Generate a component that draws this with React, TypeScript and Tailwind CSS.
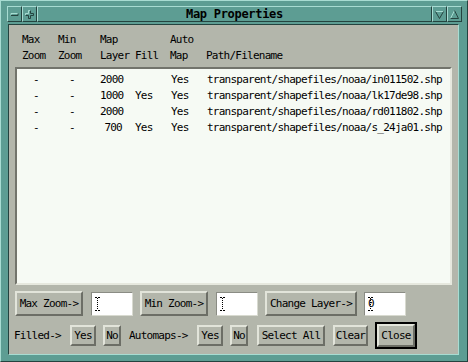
import React from "react";

const rows = [
  { layer: "2000", fill: "", auto: "Yes", path: "transparent/shapefiles/noaa/in011502.shp" },
  { layer: "1000", fill: "Yes", auto: "Yes", path: "transparent/shapefiles/noaa/lk17de98.shp" },
  { layer: "2000", fill: "", auto: "Yes", path: "transparent/shapefiles/noaa/rd011802.shp" },
  { layer: "700", fill: "Yes", auto: "Yes", path: "transparent/shapefiles/noaa/s_24ja01.shp" },
];

const raised =
  "border-2 border-t-[#e2e4da] border-l-[#e2e4da] border-b-[#6c6e66] border-r-[#6c6e66] bg-[#b3b6ab]";
const tealRaised =
  "border border-t-[#a8dcd2] border-l-[#a8dcd2] border-b-[#24433f] border-r-[#24433f] bg-[#5d9d93]";

function Btn({ w, h = "h-[21px]", children }: { w: string; h?: string; children: React.ReactNode }) {
  return (
    <div className={`flex shrink-0 items-center justify-center ${w} ${h} ${raised}`}>
      <span>{children}</span>
    </div>
  );
}

function IBeam() {
  return (
    <svg width="5" height="14" viewBox="0 0 5 14" className="absolute left-[3px] top-[4px]">
      <path d="M0 0.5h2M3 0.5h2M0 13.5h2M3 13.5h2" stroke="#000" strokeWidth="1" />
      <path d="M2.5 1v12" stroke="#000" strokeWidth="1" strokeDasharray="1 1" />
    </svg>
  );
}

function Field({ value }: { value?: string }) {
  return (
    <div className="relative h-[24px] w-[42px] shrink-0 border border-t-[#8a8c84] border-l-[#8a8c84] border-b-[#d8dad0] border-r-[#d8dad0] bg-white">
      {value && <span className="absolute left-[3px] top-[3px] leading-[16px]">{value}</span>}
      <IBeam />
    </div>
  );
}

function TitleBtn({ kind }: { kind: "min" | "plus" | "down" | "up" }) {
  return (
    <div className={`flex h-full w-[15px] shrink-0 items-center justify-center ${tealRaised}`}>
      <svg width="11" height="11" viewBox="0 0 11 11">
        {kind === "min" && (
          <>
            <path d="M2 6.5V4.5H9" stroke="#a8dcd2" fill="none" />
            <path d="M2 6.5H9V4.5" stroke="#24433f" fill="none" />
          </>
        )}
        {kind === "plus" && (
          <>
            <path d="M1.5 6.5V4.5H4.5V1.5H6.5" stroke="#a8dcd2" fill="none" />
            <path d="M1.5 6.5H4.5V9.5H6.5V6.5H9.5V4.5H6.5V1.5" stroke="#24433f" fill="none" />
          </>
        )}
        {kind === "down" && (
          <>
            <path d="M1.5 2.5H9.5" stroke="#a8dcd2" fill="none" />
            <path d="M1.5 2.5L5.5 9.5L9.5 2.5" stroke="#24433f" fill="none" />
          </>
        )}
        {kind === "up" && (
          <>
            <path d="M1.5 9.5L5.5 1.5" stroke="#a8dcd2" fill="none" />
            <path d="M5.5 1.5L9.5 9.5H1.5" stroke="#24433f" fill="none" />
          </>
        )}
      </svg>
    </div>
  );
}

export default function App() {
  return (
    <div className="flex h-[362px] w-[468px] flex-col border border-t-[#a8dcd2] border-l-[#a8dcd2] border-b-[#24433f] border-r-[#24433f] bg-[#5d9d93] pb-[5px] pl-[6px] pr-[5px] pt-[5px] font-['DejaVu_Sans_Mono',monospace] text-[11px] leading-[16px] tracking-[-0.75px] text-black">
      {/* title bar */}
      <div className="flex h-[16px] shrink-0">
        <TitleBtn kind="min" />
        <TitleBtn kind="plus" />
        <div className={`flex flex-1 items-center justify-center ${tealRaised}`}>
          <span className="text-[12px] font-bold tracking-[-0.3px]">Map Properties</span>
        </div>
        <TitleBtn kind="down" />
        <TitleBtn kind="up" />
      </div>

      {/* client area */}
      <div className="mb-[1px] ml-[1px] mr-[3px] mt-[2px] flex flex-1 flex-col border border-t-[#24433f] border-l-[#24433f] border-b-[#a8dcd2] border-r-[#a8dcd2] bg-[#b3b6ab]">
        <div className="flex pl-[13px] pt-[7px]">
          <div className="w-[36px]">Max<br />Zoom</div>
          <div className="w-[42px]">Min<br />Zoom</div>
          <div className="w-[35px]">Map<br />Layer</div>
          <div className="w-[35px]">&nbsp;<br />Fill</div>
          <div className="w-[36px]">Auto<br />Map</div>
          <div>&nbsp;<br />Path/Filename</div>
        </div>

        <div className="mx-[6px] mt-[3px] h-[218px] border-2 border-t-[#72746c] border-l-[#72746c] border-b-[#e6e8de] border-r-[#e6e8de] bg-[#f6faf4] pl-[5px] pt-[3px]">
          {rows.map((r) => (
            <div key={r.path} className="flex whitespace-pre">
              <div className="w-[36px] pl-[11px]">-</div>
              <div className="w-[42px] pl-[11px]">-</div>
              <div className="w-[35px] pr-[13px] text-right">{r.layer}</div>
              <div className="w-[35px]">{r.fill}</div>
              <div className="w-[36px] pl-[1px]">{r.auto}</div>
              <div className="pl-[1px]">{r.path}</div>
            </div>
          ))}
        </div>

        <div className="mt-[6px] flex h-[25px] items-center pl-[6px]">
          <Btn w="w-[68px]" h="h-[25px]">Max Zoom-&gt;</Btn>
          <div className="ml-[8px]"><Field /></div>
          <div className="ml-[7px]"><Btn w="w-[68px]" h="h-[25px]">Min Zoom-&gt;</Btn></div>
          <div className="ml-[8px]"><Field /></div>
          <div className="ml-[7px]"><Btn w="w-[92px]" h="h-[25px]">Change Layer-&gt;</Btn></div>
          <div className="ml-[7px]"><Field value="0" /></div>
        </div>

        <div className="mt-[6px] flex h-[27px] items-center pl-[5px]">
          <span className="w-[56px]">Filled-&gt;</span>
          <Btn w="w-[26px]">Yes</Btn>
          <div className="ml-[7px]"><Btn w="w-[18px]">No</Btn></div>
          <span className="ml-[8px] w-[68px]">Automaps-&gt;</span>
          <Btn w="w-[26px]">Yes</Btn>
          <div className="ml-[7px]"><Btn w="w-[18px]">No</Btn></div>
          <div className="ml-[9px]"><Btn w="w-[68px]">Select All</Btn></div>
          <div className="ml-[8px]"><Btn w="w-[35px]">Clear</Btn></div>
          <div className="ml-[7px] border-2 border-black">
            <Btn w="w-[38px]" h="h-[23px]">Close</Btn>
          </div>
        </div>
      </div>
    </div>
  );
}
